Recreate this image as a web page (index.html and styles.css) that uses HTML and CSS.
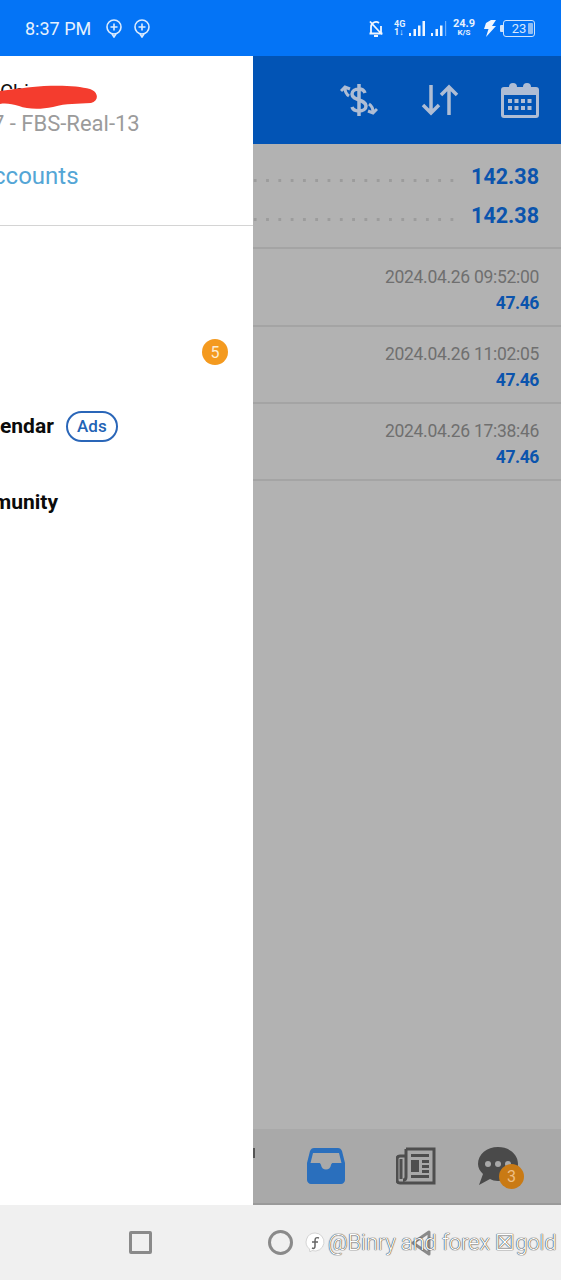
FILE: index.html
```html
<!DOCTYPE html>
<html lang="en">
<head>
<meta charset="utf-8">
<title>Trading history</title>
<link rel="stylesheet" href="styles.css">
</head>
<body>
<div class="screen">
  <header class="status">
    <div class="status-left">
      <span class="time">8:37 PM</span>
      <svg class="msg" viewBox="0 0 18 20"><circle cx="9" cy="9" r="7" /><path d="M9 5.500v7M5.500 9h7" /><path d="M7 16l2 3 2-3" /></svg>
      <svg class="msg" viewBox="0 0 18 20"><circle cx="9" cy="9" r="7" /><path d="M9 5.500v7M5.500 9h7" /><path d="M7 16l2 3 2-3" /></svg>
    </div>
    <div class="status-right">
      <svg class="bell" viewBox="0 0 16 17"><path d="M3 13V7a5 5 0 0 1 8-4M13 6v7M1.500 13.500h13M6 16h4M2 1.500l12 13" /></svg>
      <div class="net">
        <span class="net-top">4G</span>
        <span class="net-bot">1↓</span>
      </div>
      <svg class="bars" viewBox="0 0 17 17"><path d="M1 13h2v3H1zM5.500 9h2.500v7H5.500zM10 5.500h2.500V16H10zM14.500 1H17v15h-2.500z" /></svg>
      <svg class="bars sim2" viewBox="0 0 17 17"><path d="M1 13h2v3H1zM5.500 9h2.500v7H5.500zM10 5.500h2.500V16H10z" /><path class="faint" d="M15 1h1.200v15H15z" /></svg>
      <div class="speed">
        <span class="speed-top">24.9</span>
        <span class="speed-bot">K/S</span>
      </div>
      <svg class="bolt" viewBox="0 0 15 17"><path d="M9 0h5L10 6h4L4 17l2.500-8H2L4 3z" /></svg>
      <div class="battery"><span class="battery-num">23</span><span class="battery-fill"></span></div>
    </div>
  </header>

  <div class="body">
    <aside class="drawer">
      <div class="account">
        <div class="name">Chi</div>
        <svg class="scribble" viewBox="0 0 97 24"><path d="M0 6C16 4 28 2 44 1c18-1 36 0 46 3 9 3 9 12 1 14-14 1-24 0-38 4-14 3-26 2-34-1-7-2-13-3-19-2z" /></svg>
        <div class="server">7 - FBS-Real-13</div>
        <div class="manage">ccounts</div>
      </div>
      <div class="menu">
        <div class="menu-badge-row"><span class="badge">5</span></div>
        <div class="menu-row cal"><span class="label">endar</span><span class="pill">Ads</span></div>
        <div class="menu-row comm"><span class="label label-comm">munity</span></div>
      </div>
    </aside>

    <main class="main">
      <div class="toolbar">
        <svg class="tool tool-dollar" viewBox="0 0 38 36"><path class="thick" d="M25 11c-1-3-4-4-6-4-4 0-7 2-7 5 0 7 14 5 14 12 0 3-3 5-7 5-3 0-6-1-7-4M19 2v32" /><path class="thin" d="M9 14C6 12 5 9 5 6M1 9l4-4 5 2M29 22c3 2 4 5 4 8M37 27l-4 4-5-2" /></svg>
        <svg class="tool tool-sort" viewBox="0 0 38 32"><path class="thin3" d="M10 1v28M2 21l8 8 8-8M28 31V3M20 11l8-8 8 8" /></svg>
        <svg class="tool tool-cal" viewBox="0 0 38 36"><path class="cal-frame" fill-rule="evenodd" d="M3 5h5a4 4 0 0 1 8 0h6a4 4 0 0 1 8 0h5a3 3 0 0 1 3 3v25a3 3 0 0 1-3 3H3a3 3 0 0 1-3-3V8a3 3 0 0 1 3-3zM3 13v20h32V13z" /><path class="cal-frame" d="M7 17h4v4H7zM13.500 17h4v4h-4zM20 17h4v4h-4zM26.500 17h4v4h-4zM7 24h4v4H7zM13.500 24h4v4h-4zM20 24h4v4h-4zM26.500 24h4v4h-4z" /></svg>
      </div>
      <section class="summary">
        <div class="sum-row"><span class="dots"></span><span class="sum-val">142.38</span></div>
        <div class="sum-row"><span class="dots"></span><span class="sum-val">142.38</span></div>
      </section>
      <section class="deal deal-first">
        <div class="deal-date">2024.04.26 09:52:00</div>
        <div class="deal-val">47.46</div>
      </section>
      <section class="deal">
        <div class="deal-date">2024.04.26 11:02:05</div>
        <div class="deal-val">47.46</div>
      </section>
      <section class="deal">
        <div class="deal-date">2024.04.26 17:38:46</div>
        <div class="deal-val">47.46</div>
      </section>
      <div class="spacer"></div>
      <footer class="tabs">
        <span class="tab-mark"></span>
        <svg class="tab tab-inbox" viewBox="0 0 38 36"><path d="M7 0h24c2 0 3 1 4 3l3 12v17c0 2-2 4-4 4H4c-2 0-4-2-4-4V15L3 3c1-2 2-3 4-3zM6 5L3.500 15H12c1 0 1.500.5 2 2 .5 3 2.500 4.500 5 4.500s4.500-1.500 5-4.500c.5-1.500 1-2 2-2h8.500L32 5z" fill-rule="evenodd" /></svg>
        <svg class="tab tab-news" viewBox="0 0 40 38"><path class="news" d="M10 2h28v34H4c-2 0-3-1-3-3V12c0-2 1-3 3-3h6M10 2v28c0 2-1 3-3 3M5 12v20" /><path class="news-fill" d="M15 7h18v3H15zM15 13h8v12h-8zM26 13h7v3h-7zM26 18h7v3h-7zM26 23h7v3h-7zM15 28h18v3H15z" /></svg>
        <div class="chat-wrap">
          <svg class="tab tab-chat" viewBox="0 0 40 38"><path d="M20 0c11 0 20 7 20 17s-9 17-20 17c-3 0-6-1-8-2L1 38l4-11C2 24 0 21 0 17 0 7 9 0 20 0z" /><circle class="dot" cx="10" cy="17" r="3" /><circle class="dot" cx="20" cy="17" r="3" /><circle class="dot" cx="30" cy="17" r="3" /></svg>
          <span class="chat-badge">3</span>
        </div>
      </footer>
    </main>
  </div>

  <nav class="nav">
    <span class="nav-square"></span>
    <span class="nav-circle"></span>
    <svg class="nav-back" viewBox="0 0 20 26"><path d="M18 2v22L2 13z" /></svg>
  </nav>
  <div class="watermark">
    <svg class="wm-logo" viewBox="0 0 20 20"><path d="M10 1a9 9 0 1 1-3 17.500L5 20l-.5-3A9 9 0 0 1 10 1z" /><path class="wm-f" d="M14 6c-3-1-4 0-4 3v5c0 2-1 3-3 2M7 10h6" /></svg>
    <span class="wm-text">@Binry and forex ☒gold</span>
  </div>
</div>
</body>
</html>
```
FILE: styles.css
```css
* { box-sizing: border-box; }
html, body { margin: 0; padding: 0; }
body { font-family: Roboto, "Liberation Sans", sans-serif; background: #f0f0f0; }
.screen { width: 561px; height: 1280px; display: flex; flex-direction: column; position: relative; overflow: hidden; }

.status { height: 56px; flex: none; background: #0474f6; display: flex; justify-content: space-between; align-items: center; padding: 0 25px; color: #e6f1fd; }
.status-left { display: flex; align-items: center; }
.time { font-size: 18px; width: 80px; }
.msg { width: 18px; height: 20px; margin-right: 10px; fill: none; stroke: #dcebfd; stroke-width: 1.600; }
.status-right { display: flex; align-items: center; }
.bell { width: 16px; height: 17px; fill: none; stroke: #f0f6fe; stroke-width: 1.800; margin-right: 10px; }
.net { display: flex; flex-direction: column; width: 14px; line-height: 8px; font-weight: 700; font-size: 9px; }
.net-top, .net-bot { display: block; }
.bars { width: 17px; height: 17px; fill: #eef5fe; }
.sim2 { margin-left: 5px; }
.faint { opacity: .45; }
.speed { display: flex; flex-direction: column; align-items: center; width: 24px; margin-left: 5px; font-weight: 700; line-height: 9px; }
.speed-top { font-size: 11px; }
.speed-bot { font-size: 8px; }
.bolt { width: 15px; height: 17px; fill: #f0f6fe; margin-left: 6px; }
.battery { width: 32px; height: 17px; margin-left: 6px; margin-right: 1px; border: 1.500px solid #cfe3fb; border-radius: 3px; position: relative; display: flex; align-items: center; justify-content: center; font-size: 13px; color: #d8e9fd; }
.battery-fill { position: absolute; right: 1px; top: 2px; bottom: 2px; width: 5px; background: #8fbdf3; border-radius: 1px; }
.battery::before { content: ""; position: absolute; left: -4px; top: 4px; width: 3px; height: 7px; background: #cfe3fb; border-radius: 1px 0 0 1px; }

.body { flex: 1; min-height: 0; display: flex; }
.drawer { width: 253px; flex: none; background: #fff; overflow: hidden; }
.account { height: 170px; padding-top: 25px; border-bottom: 1px solid #d4d4d4; position: relative; }
.name { font-size: 20px; line-height: 22px; color: #111; height: 22px; overflow: hidden; }
.scribble { position: absolute; left: 0; top: 29px; width: 97px; height: 24px; fill: #f43c2e; }
.server { font-size: 22px; line-height: 26px; color: #9b9b9b; margin-top: 8px; margin-left: -8px; white-space: nowrap; }
.manage { font-size: 24px; line-height: 30px; color: #54a6d6; margin-top: 24px; margin-left: -7px; white-space: nowrap; }

.menu { display: flex; flex-direction: column; }
.menu-badge-row { display: flex; justify-content: flex-end; padding-right: 25px; margin-top: 113px; height: 26px; }
.badge { width: 26px; height: 26px; border-radius: 50%; background: #f49a1f; color: #fdecd2; font-size: 16px; display: flex; align-items: center; justify-content: center; }
.menu-row { display: flex; align-items: center; font-weight: 700; font-size: 21px; color: #0b0b0b; height: 32px; }
.cal { margin-top: 45px; }
.comm { margin-top: 44px; }
.label { white-space: nowrap; }
.label-comm { margin-left: -7px; }
.pill { width: 52px; height: 31px; margin-left: 12px; border: 2px solid #2a66b8; border-radius: 16px; color: #2263b5; font-size: 17px; font-weight: 500; display: flex; align-items: center; justify-content: center; }

.main { flex: 1; min-width: 0; background: #b2b2b2; display: flex; flex-direction: column; }
.toolbar { height: 88px; flex: none; background: #0254b5; display: flex; align-items: center; justify-content: flex-end; padding: 0 22px 0 0; }
.tool { height: 36px; }
.tool-dollar { width: 38px; margin-right: 43px; fill: none; }
.tool-sort { width: 38px; height: 32px; margin-right: 42px; fill: none; }
.tool-cal { width: 38px; }
.thick { stroke: #afbdd4; stroke-width: 3.500; fill: none; }
.thin { stroke: #afbdd4; stroke-width: 3; fill: none; }
.thin3 { stroke: #afbdd4; stroke-width: 3.500; fill: none; }
.cal-frame { fill: #afbdd4; }

.summary { height: 105px; flex: none; border-bottom: 2px solid #a4a4a4; padding-top: 20px; }
.sum-row { display: flex; align-items: center; height: 25px; padding-right: 22px; margin-bottom: 14px; }
.dots { flex: 1; height: 3px; margin-right: 13px; margin-top: 8px; background-image: radial-gradient(circle, #9c9c9c 1.500px, transparent 1.700px); background-size: 12.300px 3px; background-repeat: repeat-x; background-position: right center; }
.sum-val { font-size: 21.500px; font-weight: 700; color: #0b54ad; }

.deal { height: 77px; flex: none; border-bottom: 2px solid #a4a4a4; padding: 15px 22px 0 0; text-align: right; }
.deal-first { height: 78px; padding-top: 16px; }
.deal-date { font-size: 17.500px; line-height: 24px; color: #6f6f6f; letter-spacing: -.3px; }
.deal-val { font-size: 17.500px; line-height: 24px; font-weight: 700; color: #0b54ad; margin-top: 2px; letter-spacing: -.4px; }

.spacer { flex: 1; }
.tabs { height: 76px; flex: none; background: #a9a9a9; border-bottom: 2px solid #9a9a9a; display: flex; align-items: center; padding-left: 54px; position: relative; }
.tab-mark { position: absolute; left: 0; top: 19px; width: 2px; height: 10px; background: #555; }
.tab { display: block; }
.tab-inbox { width: 38px; height: 36px; fill: #2a6fbd; margin-right: 51px; }
.tab-news { width: 40px; height: 38px; margin-right: 42px; }
.news { fill: none; stroke: #4e4e4e; stroke-width: 3; }
.news-fill { fill: #4e4e4e; }
.chat-wrap { position: relative; width: 40px; height: 38px; }
.tab-chat { width: 40px; height: 38px; fill: #4a4a4a; }
.dot { fill: #a9a9a9; }
.chat-badge { position: absolute; left: 21px; top: 17px; width: 25px; height: 25px; border-radius: 50%; background: #c97a14; color: #eebf84; font-size: 16px; display: flex; align-items: center; justify-content: center; }

.nav { height: 75px; flex: none; background: #f0f0f0; display: flex; align-items: center; padding-left: 129px; }
.nav-square { width: 23px; height: 23px; border: 3px solid #8a8a8a; border-radius: 2px; }
.nav-circle { width: 25px; height: 25px; border: 3px solid #8a8a8a; border-radius: 50%; margin-left: 116px; }
.nav-back { width: 20px; height: 26px; margin-left: 118px; fill: none; stroke: #8a8a8a; stroke-width: 3; stroke-linejoin: round; }

.watermark { position: absolute; left: 305px; top: 1230px; height: 24px; display: flex; align-items: center; white-space: nowrap; }
.wm-text { font-size: 21.700px; font-weight: 300; color: #fff; text-shadow: 0 0 1px #222, 0 0 1px #222; }
.wm-logo { width: 20px; height: 20px; fill: #fff; stroke: #bbb; stroke-width: .6; margin-right: 3px; }
.wm-f { fill: none; stroke: #666; stroke-width: 1.500; }
```
